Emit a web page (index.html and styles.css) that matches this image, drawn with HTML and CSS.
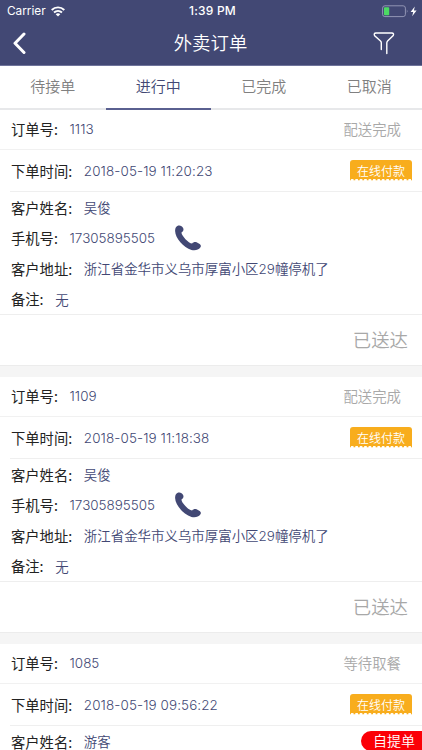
FILE: index.html
```html
<!DOCTYPE html>
<html lang="zh-CN">
<head>
<meta charset="utf-8">
<title>外卖订单</title>
<link rel="stylesheet" href="styles.css">
</head>
<body>
<svg class="defs" width="0" height="0" aria-hidden="true">
  <symbol id="phone" viewBox="0 0 26 26"><path d="M3.2 0.6C5.2-.1 7.2 1.2 8.1 3C9 4.900 8.300 6.500 6.500 7.500C6.100 10.200 13.500 18.200 17.100 18.600C18.300 17.200 20 16.700 22 17.500L24.700 18.900C26.100 19.900 26.200 21.300 25.300 22.600C23.500 25 20 25.800 16.500 24.900C8.500 22.400 .3 13.200.1 6C0 3.200 1.200 1.300 3.200.6Z"/></symbol>
</svg>
<div class="screen">
  <header class="header">
    <div class="status">
      <div class="carrier">Carrier
        <svg class="wifi" width="14" height="11" viewBox="0 0 14 11"><g fill="none" stroke="#fff" stroke-width="1.9"><path d="M.7 4C4.300.5 9.700.5 13.300 4"/><path d="M3 6.500C5.300 4.400 8.700 4.400 11 6.500"/></g><path d="M4.700 8.200Q7 6.300 9.300 8.200L7 10.600Z" fill="#fff"/></svg>
      </div>
      <div class="clock">1:39 PM</div>
      <div class="power">
        <svg width="36" height="13" viewBox="0 0 36 13"><rect x=".6" y=".8" width="22.800" height="10.800" rx="2.300" fill="none" stroke="#9295b4"/><rect x="2" y="2.200" width="5.200" height="8" rx=".8" fill="#4cd964"/><path d="M24.800 4.500q1.700 1.700 0 3.400z" fill="#9295b4"/><path d="M32.800 1.500L28.600 7H31.200L30.200 11.200L34.600 5.600H31.900Z" fill="#fff"/></svg>
      </div>
    </div>
    <div class="nav">
      <svg class="back" width="15" height="24" viewBox="0 0 15 24"><path d="M12 2L3 11.200L12 20.500" fill="none" stroke="#fff" stroke-width="3" stroke-linecap="round" stroke-linejoin="round"/></svg>
      <h1>外卖订单</h1>
      <svg class="filter" width="22" height="24" viewBox="0 0 22 24"><path d="M8.300 17.500V10.800Q8.300 9.700 7.500 8.900L1.700 3.800Q.3 1.200 3 1H18.800Q21.400 1.200 20.200 3.600L14.600 8.900Q13.800 9.700 13.800 10.900V21.500" fill="none" stroke="#fff" stroke-width="1.400" stroke-linecap="round"/></svg>
    </div>
  </header>
  <nav class="tabs">
    <div class="tab">待接单</div>
    <div class="tab active">进行中</div>
    <div class="tab">已完成</div>
    <div class="tab">已取消</div>
  </nav>
  <main>
    <section class="order">
      <div class="row number"><span class="label">订单号:</span><span class="value">1113</span><span class="state">配送完成</span></div>
      <div class="row time"><span class="label">下单时间:</span><span class="value date">2018-05-19 11:20:23</span><span class="pay">在线付款</span></div>
      <div class="info">
        <div class="line"><span class="label">客户姓名:</span><span class="value">吴俊</span></div>
        <div class="line"><span class="label">手机号:</span><span class="value">17305895505</span><svg class="phone"><use href="#phone"/></svg></div>
        <div class="line"><span class="label">客户地址:</span><span class="value">浙江省金华市义乌市厚富小区29幢停机了</span></div>
        <div class="line"><span class="label">备注:</span><span class="value">无</span></div>
      </div>
      <div class="action">已送达</div>
    </section>
    <section class="order">
      <div class="row number"><span class="label">订单号:</span><span class="value">1109</span><span class="state">配送完成</span></div>
      <div class="row time"><span class="label">下单时间:</span><span class="value date">2018-05-19 11:18:38</span><span class="pay">在线付款</span></div>
      <div class="info">
        <div class="line"><span class="label">客户姓名:</span><span class="value">吴俊</span></div>
        <div class="line"><span class="label">手机号:</span><span class="value">17305895505</span><svg class="phone"><use href="#phone"/></svg></div>
        <div class="line"><span class="label">客户地址:</span><span class="value">浙江省金华市义乌市厚富小区29幢停机了</span></div>
        <div class="line"><span class="label">备注:</span><span class="value">无</span></div>
      </div>
      <div class="action">已送达</div>
    </section>
    <section class="order">
      <div class="row number"><span class="label">订单号:</span><span class="value">1085</span><span class="state">等待取餐</span></div>
      <div class="row time"><span class="label">下单时间:</span><span class="value date">2018-05-19 09:56:22</span><span class="pay">在线付款</span></div>
      <div class="info">
        <div class="line"><span class="label">客户姓名:</span><span class="value">游客</span><span class="pickup">自提单</span></div>
      </div>
    </section>
  </main>
</div>
</body>
</html>
```
FILE: styles.css
```css
* { box-sizing: border-box; }
body {
  margin: 0;
  background: #fff;
  font-family: Inter, "Noto Sans CJK SC", sans-serif;
  font-weight: 350;
}
.defs { position: absolute; }
.screen { height: 750px; overflow: hidden; }

.header {
  height: 66px;
  background: #424874;
  border-bottom: 1px solid #6f749b;
  color: #fff;
}
.status {
  display: grid;
  grid-template-columns: 1fr auto 1fr;
  align-items: center;
  height: 22px;
  padding: 0 4px 0 7px;
  font-size: 12px;
  font-weight: 400;
  line-height: 22px;
}
.carrier { display: flex; align-items: center; gap: 5px; font-size: 11.8px; }
.clock { font-weight: 500; letter-spacing: .2px; }
.power { display: flex; justify-content: flex-end; }
.nav {
  display: grid;
  grid-template-columns: 38px 1fr 42px;
  align-items: center;
  height: 43px;
  padding: 0 6px 0 12px;
}
.nav h1 {
  margin: 0 3px 0 0;
  padding-bottom: 2px;
  text-align: center;
  font-size: 18.4px;
  font-weight: 350;
  line-height: 40px;
}
.filter { margin-left: -1px; }

.tabs {
  display: flex;
  height: 44px;
  font-size: 15px;
  line-height: 42px;
  text-align: center;
  color: #808080;
}
.tab { flex: 1; border-bottom: 2px solid #e7e8ea; }
.tab.active { color: #424874; border-bottom-color: #5a6090; }

.order { border-bottom: 11px solid #f5f5f5; box-shadow: inset 0 -1px #ececec; }
.row { display: flex; align-items: center; }
.number { height: 40px; padding: 0 21px 2px 11px; border-bottom: 1px solid #f1f1f1; }
.time { height: 42px; margin-left: 10px; padding: 0 10px 0 1px; border-bottom: 1px solid #efefef; }
.label {
  font-family: "Noto Sans CJK SC", sans-serif;
  font-size: 14.3px;
  font-weight: 400;
  color: #222;
  white-space: nowrap;
}
.value { margin-left: 11.7px; font-size: 13.45px; color: #424874; white-space: nowrap; }
.date { letter-spacing: .1px; }
.state { margin-left: auto; font-size: 14.4px; color: #a8a8a8; }
.pay {
  width: 62px;
  height: 21px;
  margin-left: auto;
  border-radius: 3px 3px 0 0;
  background:
    radial-gradient(circle at 2.2px 4px, #fff 1.7px, transparent 2.2px) 0 100% / 4.43px 4px repeat-x,
    #f8ad1d;
  color: #fff;
  font-size: 12px;
  line-height: 23px;
  text-align: center;
}
.info { padding: 0 0 0 11px; border-bottom: 1px solid #eee; }
.line { display: flex; align-items: center; height: 30.5px; }
.phone { width: 26px; height: 26px; margin-left: 20px; fill: #424874; }
.action {
  height: 51px;
  padding-right: 14px;
  font-size: 18.4px;
  line-height: 51px;
  text-align: right;
  color: #a8a8a8;
}
.pickup {
  width: 61px;
  height: 20px;
  margin-left: auto;
  padding-left: 12px;
  border-radius: 10px 0 0 10px;
  background: #fb0007;
  color: #fff;
  font-size: 14px;
  line-height: 19px;
}
```
